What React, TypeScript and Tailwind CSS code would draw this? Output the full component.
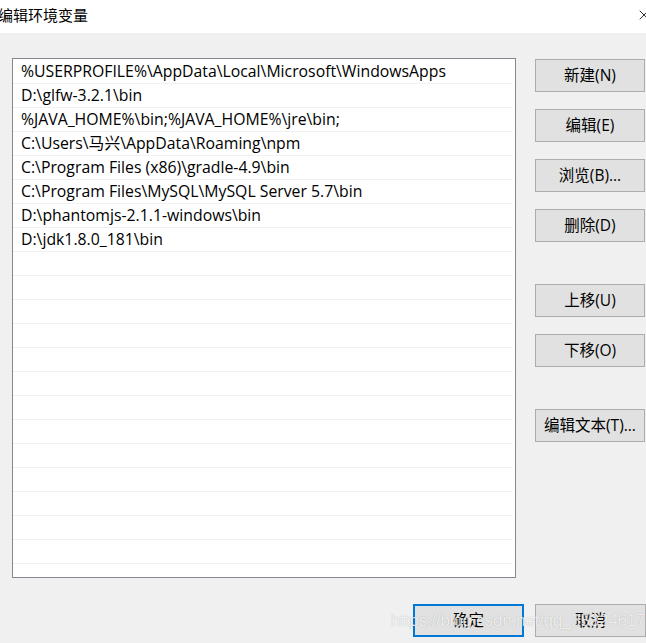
import { X } from "lucide-react";

const paths = [
  "%USERPROFILE%\\AppData\\Local\\Microsoft\\WindowsApps",
  "D:\\glfw-3.2.1\\bin",
  "%JAVA_HOME%\\bin;%JAVA_HOME%\\jre\\bin;",
  "C:\\Users\\马兴\\AppData\\Roaming\\npm",
  "C:\\Program Files (x86)\\gradle-4.9\\bin",
  "C:\\Program Files\\MySQL\\MySQL Server 5.7\\bin",
  "D:\\phantomjs-2.1.1-windows\\bin",
  "D:\\jdk1.8.0_181\\bin",
];

const rows = [...paths, ...Array(14).fill("")];

const SideButton = ({ label, className = "" }: { label: string; className?: string }) => (
  <button
    className={`w-[110px] h-[33px] bg-[#e1e1e1] border border-[#adadad] text-[15.5px] text-black ${className}`}
  >
    {label}
  </button>
);

const App = () => {
  return (
    <div className="relative w-[646px] h-[643px] bg-[#f0f0f0] overflow-hidden font-['Open_Sans','Noto_Sans_CJK_SC',sans-serif] text-black">
      {/* title bar */}
      <div className="h-[33px] bg-white flex items-center justify-between">
        <span className="text-[15px] -ml-[2px] pb-[2px]">编辑环境变量</span>
        <X className="w-[16px] h-[16px] mr-[-6px] mb-[4px]" strokeWidth={1.2} />
      </div>

      <div className="flex pl-[12px] pt-[25px]">
        {/* list */}
        <div className="w-[504px] h-[520px] bg-white border border-[#828790] overflow-hidden pt-px">
          {rows.map((p, i) => (
            <div
              key={i}
              className="h-[24px] mr-[2px] border-b border-[#f0f0f0] pl-[8px] flex items-center text-[15.8px] leading-none whitespace-nowrap"
            >
              {p}
            </div>
          ))}
        </div>

        {/* side buttons */}
        <div className="flex flex-col ml-[19px] pt-[1px]">
          <SideButton label="新建(N)" />
          <SideButton label="编辑(E)" className="mt-[17px]" />
          <SideButton label="浏览(B)..." className="mt-[17px]" />
          <SideButton label="删除(D)" className="mt-[17px]" />
          <SideButton label="上移(U)" className="mt-[42px]" />
          <SideButton label="下移(O)" className="mt-[17px]" />
          <SideButton label="编辑文本(T)..." className="mt-[42px]" />
        </div>
      </div>

      {/* bottom buttons */}
      <div className="flex justify-end gap-[11px] mt-[26px]">
        <button className="w-[111px] h-[33px] bg-[#e1e1e1] border-2 border-[#0078d7] text-[15.5px]">确定</button>
        <button className="w-[111px] h-[33px] bg-[#e1e1e1] border border-[#adadad] text-[15.5px]">取消</button>
      </div>

      {/* watermark */}
      <div className="absolute left-[391px] top-[612px] text-[17px] leading-none tracking-[-0.2px] text-white/80 font-['Liberation_Sans',sans-serif] [text-shadow:0_0_1px_rgba(0,0,0,0.3)] pointer-events-none whitespace-nowrap">
        https://blog.csdn.net/qq_35324617
      </div>
    </div>
  );
};

export default App;
